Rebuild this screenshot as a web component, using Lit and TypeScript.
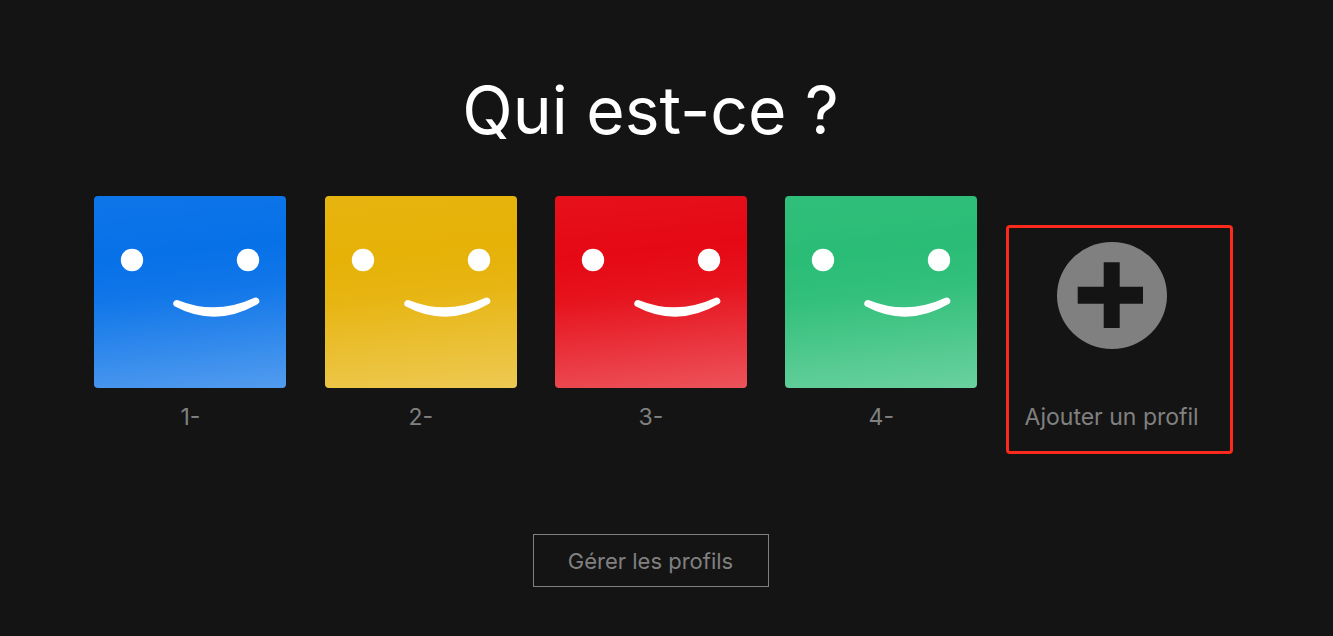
import { LitElement, html, css, svg } from "lit";
import { customElement } from "lit/decorators.js";

const face = svg`<svg class="face" viewBox="0 0 192 192" aria-hidden="true">
  <circle cx="38" cy="64" r="11.2" fill="#fff"></circle>
  <circle cx="154" cy="64" r="11.2" fill="#fff"></circle>
  <path d="M84.1 104.2Q122 119.6 160.5 101.7A3.6 3.6 0 0 1 164.1 107.8Q122 132.4 80.5 110.3A3.6 3.6 0 0 1 84.1 104.2Z" fill="#fff"></path>
</svg>`;

@customElement("app-root")
export class AppRoot extends LitElement {
  static styles = css`
    :host {
      display: block;
      width: 1333px;
      height: 636px;
      overflow: hidden;
      background: #141414;
      font-family: Inter, "Liberation Sans", sans-serif;
    }
    .page {
      width: 1301px;
      display: flex;
      flex-direction: column;
      align-items: center;
      padding-top: 70px;
    }
    h1 {
      margin: 0;
      font-size: 66px;
      font-weight: 400;
      line-height: 80px;
      color: #fff;
    }
    .row {
      align-self: stretch;
      display: flex;
      align-items: flex-start;
      gap: 28.7px;
      padding: 46px 0 0 94.4px;
    }
    .cards {
      display: flex;
      gap: 38.3px;
    }
    .card {
      width: 192px;
      display: flex;
      flex-direction: column;
      align-items: center;
    }
    .avatar {
      width: 192px;
      height: 192px;
      border-radius: 4px;
      background-image: linear-gradient(174deg, rgba(255,255,255,.03) 0%, rgba(255,255,255,0) 30%, rgba(255,255,255,.04) 50%, rgba(255,255,255,.3) 100%);
    }
    .blue { background-color: #0771e8; }
    .yellow { background-color: #e6b208; }
    .red { background-color: #e50914; }
    .green { background-color: #2abd76; }
    .face { display: block; width: 192px; height: 192px; }
    .name {
      margin-top: 16px;
      font-size: 23px;
      line-height: 26px;
      color: #808080;
    }
    .add {
      box-sizing: border-box;
      width: 227px;
      height: 229px;
      margin-top: 29px;
      border: 3px solid #fa2a1c;
      border-radius: 4px;
      padding: 14px 0 0 15.6px;
    }
    .plus { display: block; margin-left: 32.4px; width: 110px; height: 107px; }
    .add .name { margin-top: 55px; white-space: nowrap; }
    .manage {
      margin-top: 80px;
      box-sizing: border-box;
      width: 236px;
      height: 53px;
      border: 1px solid #808080;
      background: transparent;
      color: #808080;
      font: 400 22px Inter, "Liberation Sans", sans-serif;
      padding: 0;
    }
  `;

  render() {
    const cards = [
      ["blue", "1-"],
      ["yellow", "2-"],
      ["red", "3-"],
      ["green", "4-"],
    ];
    return html`<div class="page">
      <h1>Qui est-ce ?</h1>
      <div class="row">
        <div class="cards">
          ${cards.map(
            ([c, n]) => html`<div class="card">
              <div class="avatar ${c}">${face}</div>
              <div class="name">${n}</div>
            </div>`
          )}
        </div>
        <div class="add">
          <svg class="plus" viewBox="0 0 110 107" aria-hidden="true">
            <ellipse cx="55" cy="53.5" rx="55" ry="53.5" fill="#808080"></ellipse>
            <path d="M46.7 20.3H62.7V44.7H86V61.7H62.7V86H46.7V61.7H20.7V44.7H46.7Z" fill="#141414"></path>
          </svg>
          <div class="name">Ajouter un profil</div>
        </div>
      </div>
      <button class="manage">Gérer les profils</button>
    </div>`;
  }
}
